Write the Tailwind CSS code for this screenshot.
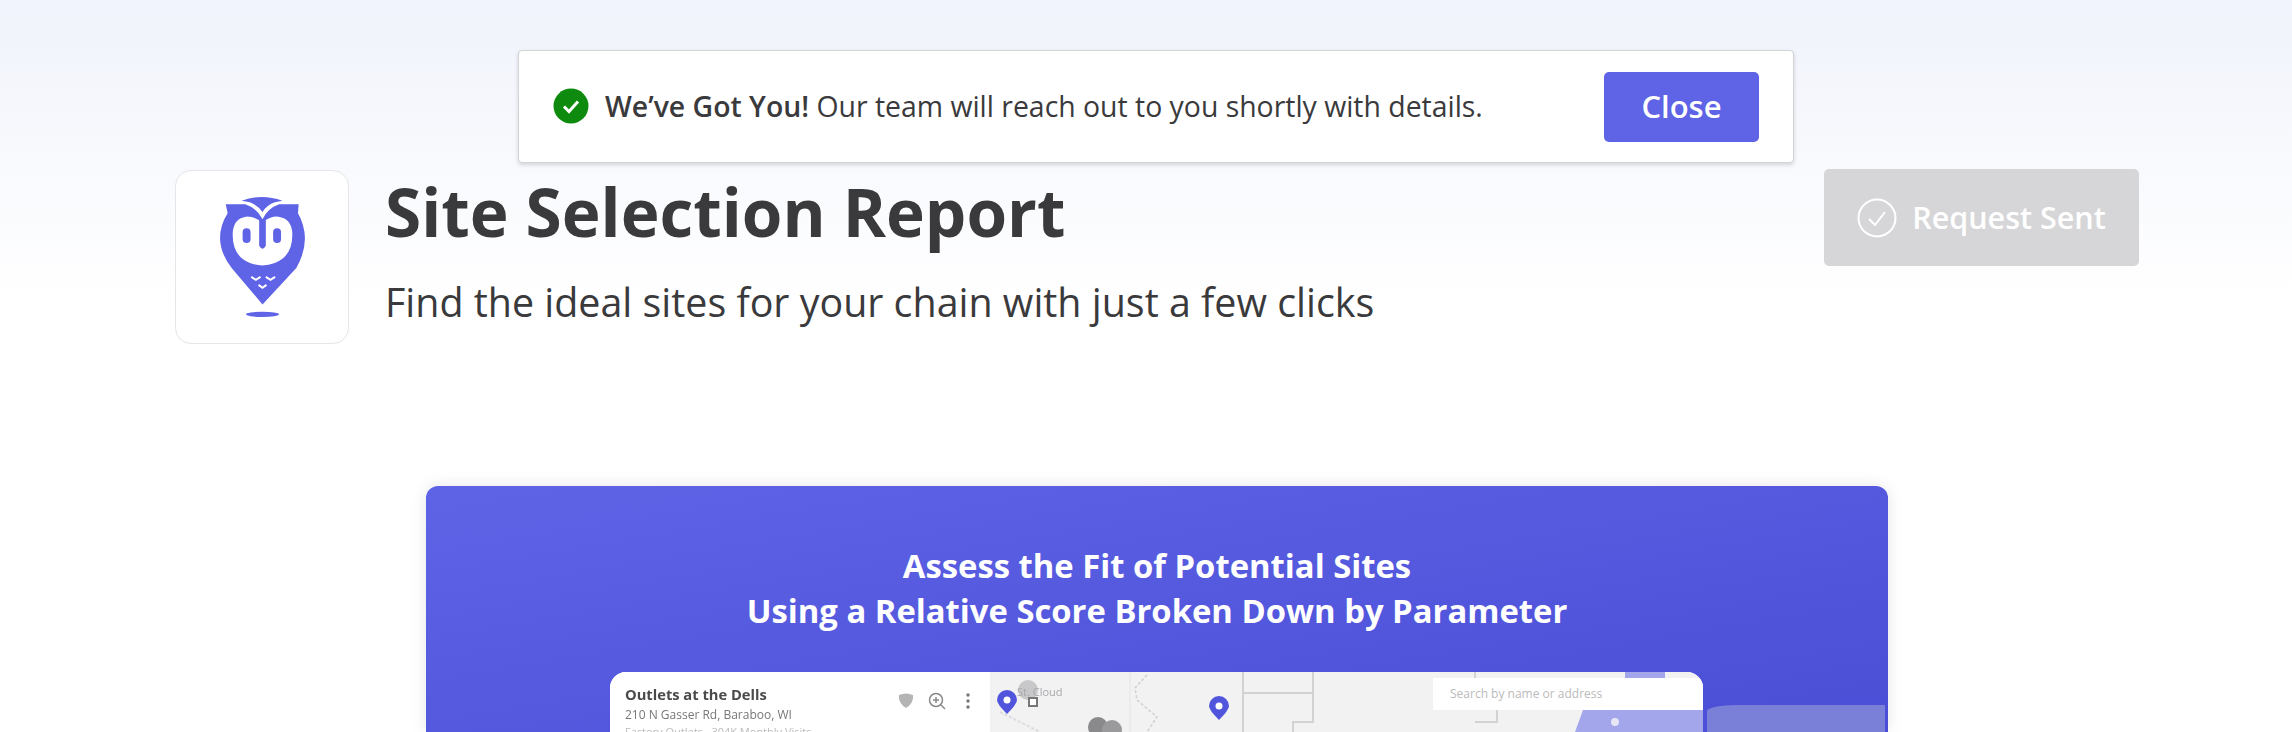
<!DOCTYPE html>
<html lang="en">
<head>
  <meta charset="UTF-8" />
  <meta name="viewport" content="width=device-width, initial-scale=1.0"/>
  <title>Site Selection Report</title>
  <script src="https://cdn.jsdelivr.net/npm/@tailwindcss/browser@4"></script>
</head>
<body class="relative h-[732px] overflow-hidden bg-white font-['Open_Sans',sans-serif]">
  <!-- page tint -->
  <div class="absolute inset-x-0 top-0 h-[300px] bg-gradient-to-b from-[#f0f3fb] to-white"></div>

  <!-- Toast -->
  <div class="absolute left-[518px] top-[50px] z-10 flex h-[113px] w-[1276px] items-center justify-between rounded-[4px] border border-[#d4d4d8] bg-white pl-[34px] pr-[34px] shadow-[0_2px_4px_rgba(0,0,0,0.15)]">
    <div class="flex items-center gap-[16px] text-[28.4px] text-[#3a3a3c]">
      <svg class="h-[36px] w-[36px] shrink-0" viewBox="0 0 36 36">
        <circle cx="18" cy="18" r="17.5" fill="#0e8a0e"/>
        <path d="M11 18.5l5 5 9-10" fill="none" stroke="#fff" stroke-width="3"/>
      </svg>
      <p><span class="font-semibold">We’ve Got You!</span> Our team will reach out to you shortly with details.</p>
    </div>
    <button class="h-[70px] w-[155px] rounded-[5px] bg-[#5f63e6] text-[31px] font-semibold text-white">Close</button>
  </div>

  <div class="relative">
    <!-- Header -->
    <header class="flex items-start justify-between pl-[175px] pr-[153px] pt-[170px]">
      <div class="flex gap-[36px]">
        <div class="flex h-[174px] w-[174px] items-center justify-center rounded-[16px] border border-[#e5e5ea] bg-white pt-[2px]">
          <svg class="h-[126px] w-[85px]" viewBox="180 105 256 380">
            <path d="M245 122Q305 100 368 122L345 127Q322 135 308 156Q292 135 270 127Z" fill="#5f63e6"/>
            <path d="M197 133H256Q292 145 308 178Q324 145 358 133H417L415 160Q435 195 436 235Q436 280 410 325L308 435L215 325Q180 280 180 235Q180 195 203 160Z" fill="#5f63e6"/>
            <path d="M308 188Q285 170 262 170Q218 175 218 225Q218 290 270 310Q308 325 345 310Q398 290 398 225Q398 175 352 170Q330 170 308 188Z" fill="#fff"/>
            <rect x="248" y="205" width="24" height="45" rx="12" fill="#5f63e6"/>
            <rect x="340" y="205" width="24" height="45" rx="12" fill="#5f63e6"/>
            <path d="M298 180H318V258Q308 276 298 258Z" fill="#5f63e6"/>
            <path d="M274 352l14 9 14-9M318 352l14 9 14-9M296 376l12 9 12-9" fill="none" stroke="#fff" stroke-width="6"/>
            <ellipse cx="308" cy="465" rx="50" ry="8" fill="#5f63e6"/>
          </svg>
        </div>
        <div class="pt-[2px]">
          <h1 class="text-[65.7px] font-bold leading-[80px] text-[#3a3a3c]">Site Selection Report</h1>
          <p class="mt-[22px] text-[39.4px] leading-[56px] text-[#3a3a3c]">Find the ideal sites for your chain with just a few clicks</p>
        </div>
      </div>
      <div class="-mt-px flex h-[97px] w-[315px] items-center justify-center gap-[15px] rounded-[5px] bg-[#d6d6d8] text-[30.5px] font-semibold text-white">
        <svg class="h-[40px] w-[40px]" viewBox="0 0 40 40" fill="none" stroke="#fff" stroke-width="2">
          <circle cx="20" cy="20" r="18.500"/>
          <path d="M12 21l6 6 10-13"/>
        </svg>
        <span>Request Sent</span>
      </div>
    </header>

    <!-- Preview card -->
    <section class="ml-[426px] mt-[142px] h-[246px] w-[1462px] overflow-hidden rounded-t-[12px] bg-gradient-to-br from-[#5f63e6] to-[#4a4ed6] shadow-[0_0_16px_rgba(0,0,0,0.1)]">
      <h2 class="pt-[57px] text-center text-[32.8px] font-bold leading-[45px] text-white">
        Assess the Fit of Potential Sites<br/>Using a Relative Score Broken Down by Parameter
      </h2>
      <div class="relative mt-[39px] flex">
        <div class="ml-[184px] flex h-[60px] w-[1093px] overflow-hidden rounded-t-[16px] bg-white blur-[0.4px]">
          <!-- Location panel -->
          <div class="w-[380px] shrink-0 bg-white pl-[15px] pt-[11px]">
            <div class="flex items-start justify-between pr-[20px]">
              <div>
                <p class="text-[14.7px] font-bold leading-[22px] text-[#4a4a4a]">Outlets at the Dells</p>
                <p class="text-[12px] leading-[20px] text-[#777]">210 N Gasser Rd, Baraboo, WI</p>
                <p class="text-[11px] leading-[14px] text-[#bbb]">Factory Outlets · 304K Monthly Visits</p>
              </div>
              <div class="flex items-center pt-[9px]">
                <svg class="h-[16px] w-[16px]" viewBox="0 0 16 16"><path d="M1 2Q8 -1 15 2Q16 10 8 15Q0 10 1 2Z" fill="#b4b4b4"/></svg>
                <svg class="ml-[14px] h-[18px] w-[18px]" viewBox="0 0 18 18" fill="none" stroke="#8a8a8a" stroke-width="1.500"><circle cx="8" cy="8" r="6.500"/><path d="M8 5v6M5 8h6M13 13l4 4"/></svg>
                <svg class="ml-[20px] h-[16px] w-[4px]" viewBox="0 0 4 16" fill="#777"><circle cx="2" cy="2" r="1.700"/><circle cx="2" cy="8" r="1.700"/><circle cx="2" cy="14" r="1.700"/></svg>
              </div>
            </div>
          </div>
          <!-- Map -->
          <div class="relative flex-1 bg-[#f2f2f3]">
            <svg class="absolute inset-0 h-full w-full" viewBox="0 0 713 60" fill="none">
              <path d="M140 0V60" stroke="#e8e8ea" stroke-width="1.500"/>
              <path d="M157 3L145 16L147 28L167 45L157 60" stroke="#d0d0d3" stroke-width="1.500" stroke-dasharray="3 2"/>
              <path d="M253 0V60M253 21H323M323 0V50H303V60" stroke="#d2d2d5" stroke-width="2"/>
              <path d="M10 40L50 60" stroke="#dcdcdf" stroke-width="2" stroke-dasharray="3 2"/>
              <path d="M485 0V6M485 50H507V38" stroke="#d2d2d5" stroke-width="2"/>
              <path d="M635 0H675V6H635Z" fill="#a3a6ea"/>
              <path d="M585 60L593 38H713V60Z" fill="#a3a6ea"/>
              <circle cx="625" cy="50" r="4" fill="#e6e6f5"/>
              <circle cx="38" cy="18" r="10" fill="#c8c8ca"/>
              <rect x="39" y="26" width="8" height="8" fill="#fff" stroke="#777" stroke-width="2"/>
              <circle cx="108" cy="55" r="10" fill="#8a8a8c"/>
              <circle cx="122" cy="58" r="10" fill="#9a9a9c"/>
            </svg>
            <span class="absolute left-[27px] top-[12px] text-[11px] leading-[16px] text-[#a8a8aa]">St. Cloud</span>
            <svg class="absolute left-[7px] top-[18px] h-[24px] w-[20px]" viewBox="0 0 20 24"><path d="M10 24Q0 14 0 10A10 10 0 0 1 20 10Q20 14 10 24Z" fill="#5055dc"/><circle cx="10" cy="10" r="3.500" fill="#fff"/></svg>
            <svg class="absolute left-[219px] top-[24px] h-[24px] w-[20px]" viewBox="0 0 20 24"><path d="M10 24Q0 14 0 10A10 10 0 0 1 20 10Q20 14 10 24Z" fill="#5055dc"/><circle cx="10" cy="10" r="3.500" fill="#fff"/></svg>
            <div class="absolute left-[443px] top-[6px] flex h-[32px] w-[270px] items-center bg-white pl-[17px] text-[12px] text-[#bbb]">Search by name or address</div>
          </div>
        </div>
        <!-- Next slide peeking in -->
        <div class="absolute bottom-0 left-[1281px] h-[27px] w-[178px] rounded-tl-[30px_6px] bg-[#7a7fd8]"></div>
      </div>
    </section>
  </div>
</body>
</html>
